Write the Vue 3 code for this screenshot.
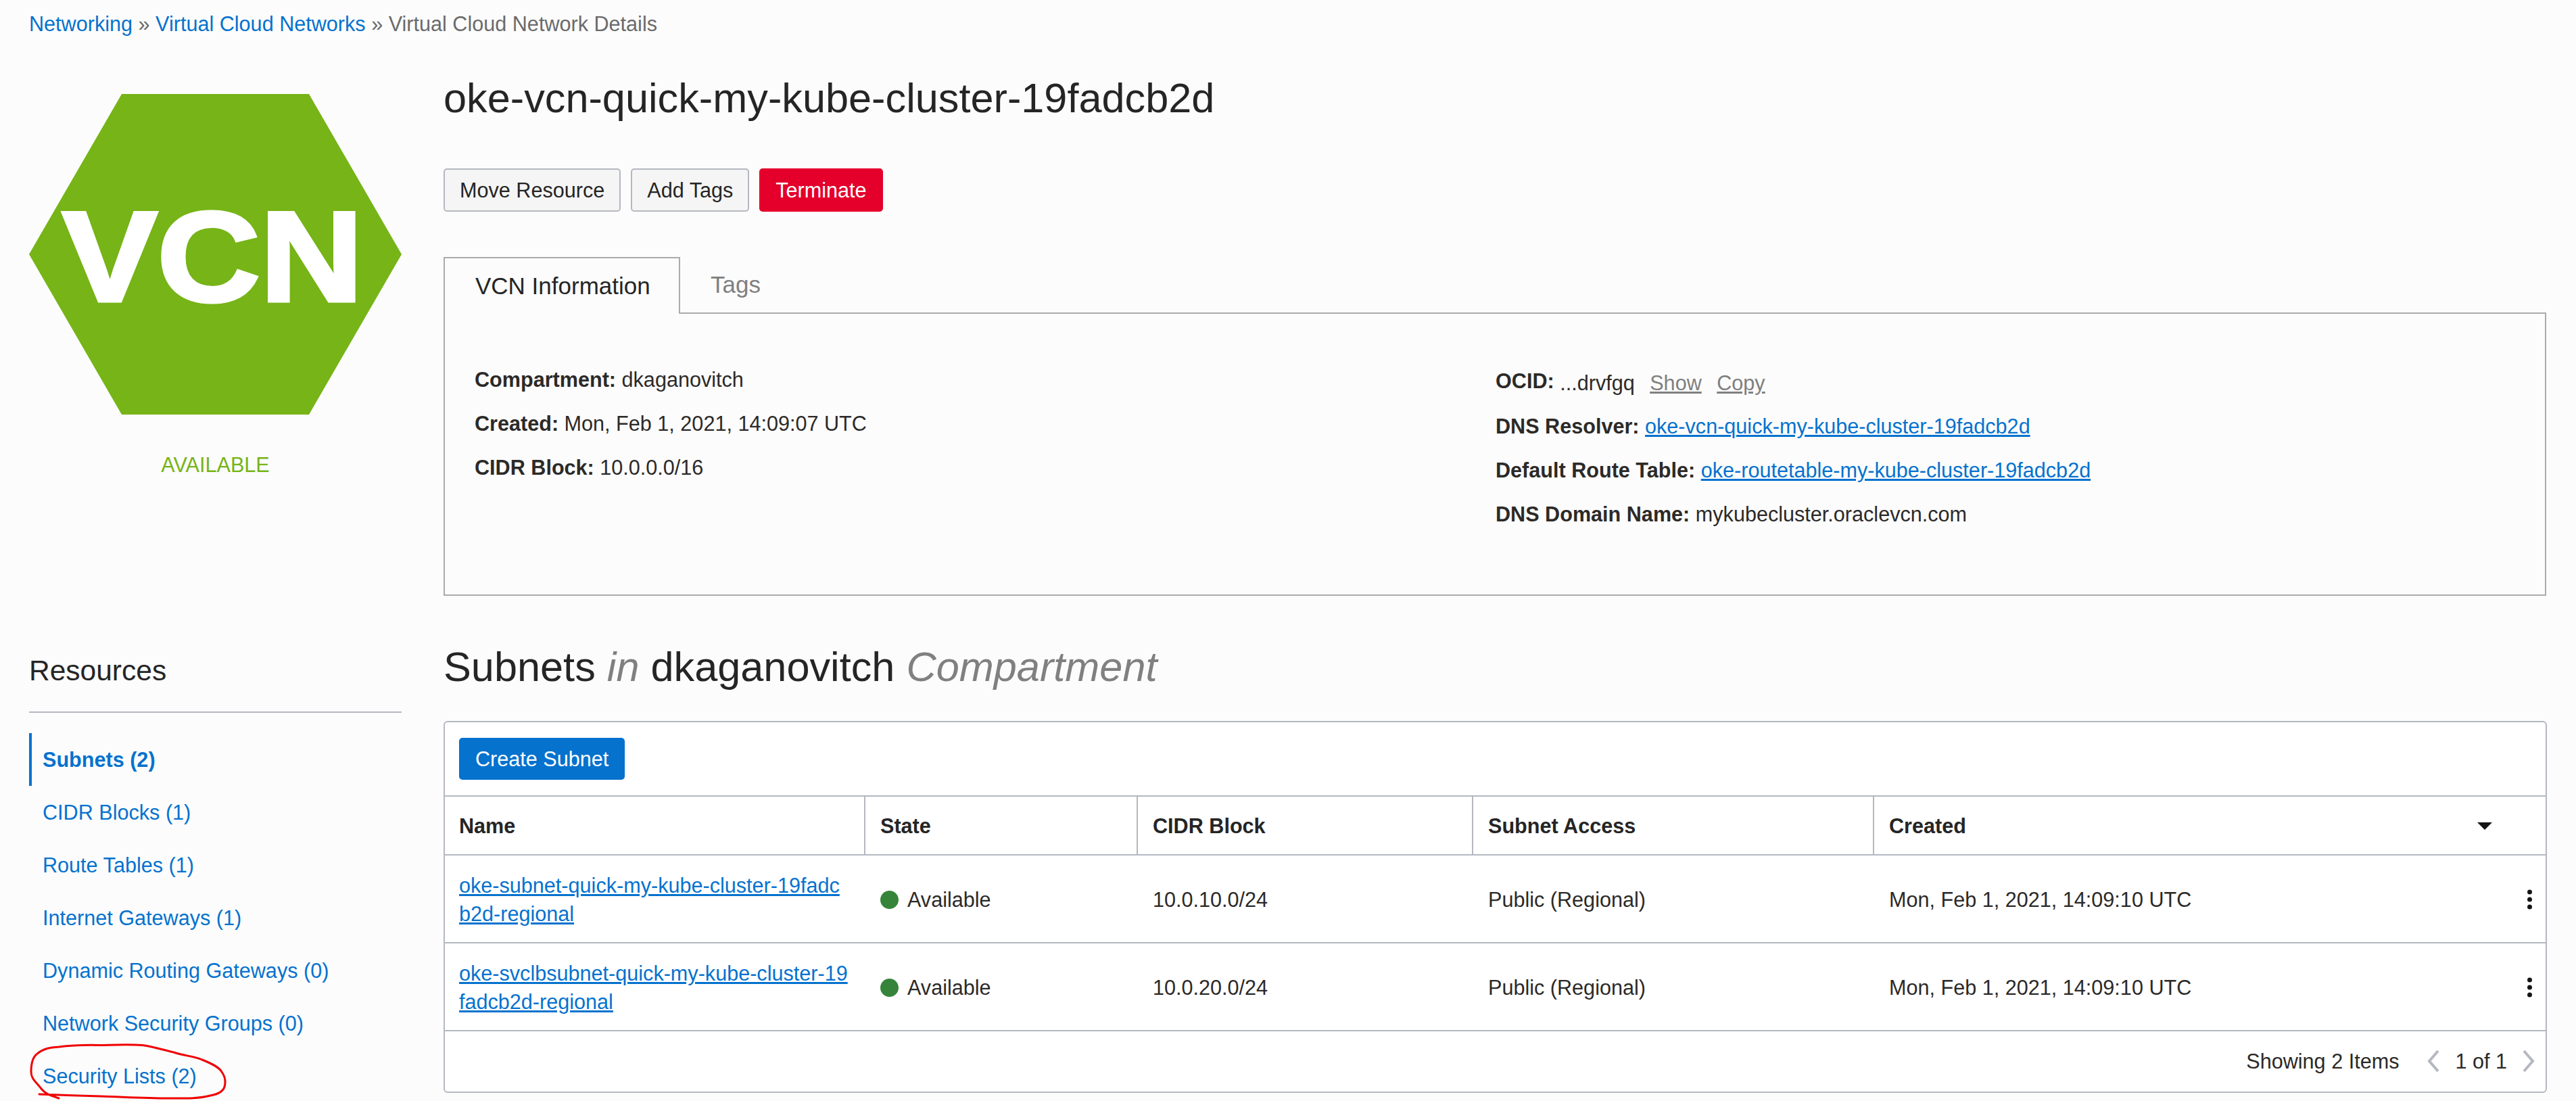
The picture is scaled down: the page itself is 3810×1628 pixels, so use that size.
<script setup>
const crumbs = [
  { label: 'Networking', link: true },
  { label: 'Virtual Cloud Networks', link: true },
  { label: 'Virtual Cloud Network Details', link: false },
]

const resources = [
  { label: 'Subnets (2)', active: true },
  { label: 'CIDR Blocks (1)' },
  { label: 'Route Tables (1)' },
  { label: 'Internet Gateways (1)' },
  { label: 'Dynamic Routing Gateways (0)' },
  { label: 'Network Security Groups (0)' },
  { label: 'Security Lists (2)' },
]

const columns = ['Name', 'State', 'CIDR Block', 'Subnet Access', 'Created']

const subnets = [
  {
    name: 'oke-subnet-quick-my-kube-cluster-19fadcb2d-regional',
    cidr: '10.0.10.0/24',
    access: 'Public (Regional)',
    created: 'Mon, Feb 1, 2021, 14:09:10 UTC',
  },
  {
    name: 'oke-svclbsubnet-quick-my-kube-cluster-19fadcb2d-regional',
    cidr: '10.0.20.0/24',
    access: 'Public (Regional)',
    created: 'Mon, Feb 1, 2021, 14:09:10 UTC',
  },
]
</script>

<template>
  <div class="page">
    <nav class="crumbs">
      <template v-for="(c, i) in crumbs" :key="c.label">
        <span v-if="i > 0" class="sep"> » </span>
        <a :class="{ link: c.link }">{{ c.label }}</a>
      </template>
    </nav>

    <div class="columns">
      <aside class="side">
        <svg class="hex" viewBox="0 0 551 474" width="551" height="474">
          <polygon points="137,0 414,0 551,237 414,474 137,474 0,237" fill="#76b417" />
          <text x="49" y="306" font-family="'Liberation Sans', Arial, sans-serif" font-weight="700" font-size="190" fill="#fff" stroke="#fff" stroke-width="5" textLength="445" lengthAdjust="spacingAndGlyphs">VCN</text>
        </svg>
        <div class="status">AVAILABLE</div>

        <h3 class="res-title">Resources</h3>
        <ul class="res-list">
          <li v-for="r in resources" :key="r.label" :class="{ active: r.active }">{{ r.label }}</li>
        </ul>
      </aside>

      <main class="main">
        <h1 class="title">oke-vcn-quick-my-kube-cluster-19fadcb2d</h1>

        <div class="actions">
          <button class="btn">Move Resource</button>
          <button class="btn">Add Tags</button>
          <button class="btn danger">Terminate</button>
        </div>

        <div class="tabs">
          <div class="tab current">VCN Information</div>
          <div class="tab">Tags</div>
        </div>
        <section class="panel">
          <div class="info">
            <p><b>Compartment:</b> dkaganovitch</p>
            <p><b>Created:</b> Mon, Feb 1, 2021, 14:09:07 UTC</p>
            <p><b>CIDR Block:</b> 10.0.0.0/16</p>
          </div>
          <div class="info right">
            <p class="ocid"><b>OCID:</b> <span class="sunk">...drvfgq <a class="muted">Show</a> <a class="muted">Copy</a></span></p>
            <p><b>DNS Resolver:</b> <a class="ul">oke-vcn-quick-my-kube-cluster-19fadcb2d</a></p>
            <p><b>Default Route Table:</b> <a class="ul">oke-routetable-my-kube-cluster-19fadcb2d</a></p>
            <p><b>DNS Domain Name:</b> mykubecluster.oraclevcn.com</p>
          </div>
        </section>

        <h2 class="list-title">Subnets <i>in</i> dkaganovitch <i>Compartment</i></h2>

        <section class="table">
          <div class="toolbar">
            <button class="btn primary">Create Subnet</button>
          </div>
          <div class="row head">
            <div v-for="col in columns" :key="col" class="cell">
              {{ col }}
              <span v-if="col === 'Created'" class="caret"></span>
            </div>
          </div>
          <div v-for="s in subnets" :key="s.name" class="row body">
            <div class="cell name"><a class="ul">{{ s.name }}</a></div>
            <div class="cell"><span class="dot"></span>Available</div>
            <div class="cell">{{ s.cidr }}</div>
            <div class="cell">{{ s.access }}</div>
            <div class="cell">
              {{ s.created }}
              <span class="kebab"><i></i><i></i><i></i></span>
            </div>
          </div>
          <div class="pager">
            <span class="count">Showing 2 Items</span>
            <svg class="chev" viewBox="0 0 20 34" width="20" height="34"><path d="M17 2 L4 17 L17 32" /></svg>
            <span>1 of 1</span>
            <svg class="chev" viewBox="0 0 20 34" width="20" height="34"><path d="M3 2 L16 17 L3 32" /></svg>
          </div>
        </section>
      </main>
    </div>

    <svg class="scribble" viewBox="0 0 340 100" width="340" height="100">
      <path d="M47 84 C36 80 28 78 22 71 C14 60 6 56 6 45 C6 32 8 24 14 19 C24 10 34 9 47 8 C70 5 90 5 109 5.5 C130 5 150 4 171 5.5 C188 8 200 12 217 16 C232 21 248 22 259 27 C274 33 284 38 288 45 C293 52 294 60 292 67 C290 74 282 78 271 80 C252 85 230 84 209 84 C176 84 142 82 109 81 C80 80 46 79 18 78" fill="none" stroke="#f00000" stroke-width="3" stroke-linecap="round" />
    </svg>
  </div>
</template>

<style scoped>
.page {
  position: relative;
  width: 3810px;
  height: 1628px;
  overflow: hidden;
  background: #fcfcfc;
  color: #2c2a28;
  font-family: 'Liberation Sans', Arial, sans-serif;
  font-size: 30.6px;
  box-sizing: border-box;
  padding: 0 44px 0 43px;
}

.crumbs {
  height: 70px;
  line-height: 70px;
  color: #6b6b6b;
}

.crumbs .link {
  color: #0572ce;
}

.sep {
  white-space: pre;
}

.columns {
  display: flex;
  gap: 62px;
}

.side {
  width: 551px;
  flex: none;
  padding-top: 69px;
}

.hex {
  display: block;
}

.status {
  margin-top: 54px;
  line-height: 40px;
  text-align: center;
  color: #76b417;
}

.res-title {
  margin: 260px 0 0;
  height: 85px;
  line-height: 50px;
  font-size: 42.5px;
  font-weight: 400;
  color: #252525;
  border-bottom: 2px solid #b5b8c1;
}

.res-list {
  list-style: none;
  margin: 30px 0 0;
  padding: 0;
}

.res-list li {
  height: 78px;
  line-height: 78px;
  padding-left: 20px;
  color: #0572ce;
}

.res-list li.active {
  border-left: 4px solid #0572ce;
  padding-left: 16px;
  font-weight: 700;
}

.main {
  flex: 1;
  min-width: 0;
}

.title {
  margin: 35px 0 0;
  line-height: 80px;
  font-size: 61.25px;
  font-weight: 400;
  color: #252525;
}

.actions {
  display: flex;
  gap: 15px;
  margin-top: 64px;
}

.btn {
  height: 64px;
  padding: 0 22px;
  border: 2px solid #b5b8c1;
  border-radius: 5px;
  background: #f5f5f5;
  color: #252525;
  font: inherit;
  white-space: nowrap;
}

.btn.danger {
  background: #e4002b;
  border-color: #e4002b;
  color: #fff;
}

.btn.primary {
  height: 62px;
  background: #0572ce;
  border-color: #0572ce;
  color: #fff;
}

.tabs {
  display: flex;
  margin-top: 67px;
  height: 84px;
  position: relative;
  z-index: 1;
}

.tab {
  line-height: 82px;
  font-size: 35px;
  color: #808080;
  padding: 0 45px;
  white-space: nowrap;
}

.tab.current {
  width: 350px;
  box-sizing: border-box;
  color: #252525;
  background: #fcfcfc;
  border: 2px solid #ababab;
  border-bottom: 0;
}

.panel {
  display: flex;
  height: 419px;
  margin-top: -2px;
  box-sizing: border-box;
  border: 2px solid #ababab;
  padding: 65px 0 0 44px;
}

.info {
  width: 1510px;
}

.info p {
  margin: 0;
  height: 65px;
  line-height: 65px;
}

.info.right p.ocid {
  height: 69px;
  line-height: 69px;
}

.sunk {
  position: relative;
  top: 3px;
}

.ul {
  color: #0572ce;
  text-decoration: underline;
}

.muted {
  color: #808080;
  text-decoration: underline;
  margin-left: 14px;
}

.list-title {
  margin: 65px 0 0;
  line-height: 80px;
  font-size: 61.25px;
  font-weight: 400;
  color: #252525;
}

.list-title i {
  color: #808080;
}

.table {
  margin-top: 40px;
  width: 3111px;
  height: 550px;
  box-sizing: border-box;
  border: 2px solid #b5b8c1;
  border-radius: 6px;
  background: #fff;
}

.toolbar {
  height: 110px;
  padding: 23px 0 0 21px;
  box-sizing: border-box;
  border-bottom: 2px solid #b5b8c1;
}

.row {
  display: grid;
  grid-template-columns: 620px 403px 496px 593px 1fr;
  border-bottom: 2px solid #b5b8c1;
  box-sizing: border-box;
}

.row.head {
  height: 87px;
  font-weight: 700;
  color: #252525;
}

.row.body {
  height: 130px;
}

.cell {
  position: relative;
  display: flex;
  align-items: center;
  padding-left: 23px;
  padding-top: 2px;
}

.row.head .cell + .cell {
  border-left: 2px solid #b5b8c1;
  padding-left: 22px;
}

.row.body .cell + .cell {
  padding-left: 24px;
}

.cell:first-child {
  padding-left: 21px;
}

.cell.name {
  width: 600px;
  box-sizing: border-box;
  display: block;
  padding: 23px 0 0 21px;
  line-height: 42px;
  word-break: break-all;
}

.dot {
  width: 27px;
  height: 27px;
  border-radius: 50%;
  background: #36843a;
  margin-right: 13px;
}

.caret {
  position: absolute;
  right: 79px;
  top: 38px;
  border-left: 11px solid transparent;
  border-right: 11px solid transparent;
  border-top: 11px solid #161513;
}

.kebab {
  position: absolute;
  right: 20px;
  top: 51%;
  transform: translateY(-50%);
  display: flex;
  flex-direction: column;
  gap: 4px;
}

.kebab i {
  width: 7px;
  height: 7px;
  border-radius: 50%;
  background: #161513;
}

.pager {
  display: flex;
  justify-content: flex-end;
  align-items: center;
  height: 88px;
  gap: 22px;
  padding-right: 15px;
}

.count {
  margin-right: 19px;
}

.chev path {
  fill: none;
  stroke: #b5b8c1;
  stroke-width: 4;
}

.scribble {
  position: absolute;
  left: 40px;
  top: 1540px;
}
</style>

<style>
html, body {
  margin: 0;
  background: #fcfcfc;
}
</style>
